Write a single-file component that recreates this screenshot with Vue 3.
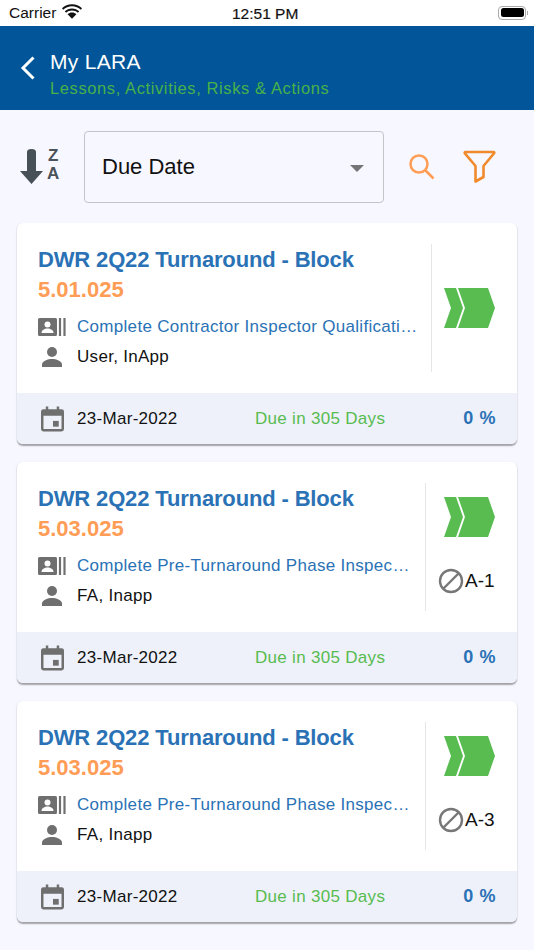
<script setup>
const cards = [
  { code: '5.01.025', task: 'Complete Contractor Inspector Qualificati…', user: 'User, InApp', tag: '' },
  { code: '5.03.025', task: 'Complete Pre-Turnaround Phase Inspec…', user: 'FA, Inapp', tag: 'A-1' },
  { code: '5.03.025', task: 'Complete Pre-Turnaround Phase Inspec…', user: 'FA, Inapp', tag: 'A-3' },
]
</script>

<template>
  <div class="screen">
    <div class="status">
      <div class="status-left">
        <span>Carrier</span>
        <svg class="wifi" width="20" height="15" viewBox="0 0 20 15"><path d="M10 2.200c3.400 0 6.500 1.300 8.800 3.500l1.200-1.400C17.400 1.800 13.900.3 10 .3S2.600 1.800 0 4.300l1.200 1.400C3.500 3.500 6.600 2.200 10 2.200z" fill="#111"/><path d="M10 6.400c2.300 0 4.300.9 5.900 2.300l1.300-1.400C15.300 5.500 12.800 4.400 10 4.400S4.700 5.500 2.800 7.300l1.300 1.400C5.700 7.300 7.700 6.400 10 6.400z" fill="#111"/><path d="M10 8.500c-1.700 0-3.200.6-4.400 1.700L10 14.800l4.400-4.600C13.200 9.100 11.700 8.500 10 8.500z" fill="#111"/></svg>
      </div>
      <span class="time">12:51 PM</span>
      <div class="battery"><span class="battery-fill"></span><span class="battery-nub"></span></div>
    </div>

    <header class="header">
      <svg class="back" width="16" height="26" viewBox="0 0 16 26"><path d="M13.500 2.500 3 13l10.500 10.500" fill="none" stroke="#fff" stroke-width="3"/></svg>
      <div class="titles">
        <div class="title">My LARA</div>
        <div class="subtitle">Lessons, Activities, Risks &amp; Actions</div>
      </div>
    </header>

    <div class="toolbar">
      <div class="sort">
        <svg class="sort-arrow" width="23" height="35" viewBox="0 0 23 35"><path d="M7 3a4.500 3 0 0 1 9 0v19h7L11.500 35 0 22h7z" fill="#474f57"/></svg>
        <div class="sort-letters"><span>Z</span><span>A</span></div>
      </div>
      <div class="select">
        <span>Due Date</span>
        <span class="caret"></span>
      </div>
      <svg class="search" width="28" height="28" viewBox="0 0 28 28"><circle cx="11" cy="11" r="8.500" fill="none" stroke="#ff9d55" stroke-width="2.500"/><path d="m17.500 17.500 8 8" fill="none" stroke="#ff9d55" stroke-width="2.500"/></svg>
      <svg class="funnel" width="33" height="33" viewBox="0 0 33 33"><path d="M2.500 2h28c.8 0 1 .8.600 1.300L20.500 16v11l-8 4.500V16L1.900 3.300C1.500 2.800 1.700 2 2.500 2z" fill="none" stroke="#f08a2c" stroke-width="2.600" stroke-linejoin="round"/></svg>
    </div>

    <div class="cards">
      <article v-for="(card, i) in cards" :key="i" class="card">
        <div class="card-body">
          <div class="info">
            <div class="card-title">DWR 2Q22 Turnaround - Block</div>
            <div class="code">{{ card.code }}</div>
            <div class="row task-row">
              <svg class="icon" width="28" height="20" viewBox="0 0 28 20"><path d="M1.500 1h16A1.500 1.500 0 0 1 19 2.500v15a1.500 1.500 0 0 1-1.500 1.500h-16A1.500 1.500 0 0 1 0 17.500v-15A1.500 1.500 0 0 1 1.500 1z" fill="#6f6f6f"/><circle cx="9.500" cy="7.500" r="3" fill="#fff"/><path d="M3.500 16c0-3 3-4.500 6-4.500s6 1.500 6 4.500z" fill="#fff"/><path d="M22 1v18M26.500 1v18" stroke="#6f6f6f" stroke-width="2.200"/></svg>
              <span class="task">{{ card.task }}</span>
            </div>
            <div class="row user-row">
              <svg class="icon" width="28" height="20" viewBox="0 0 28 20"><circle cx="14" cy="5" r="5" fill="#6f6f6f"/><path d="M4 20v-2.500C4 14 10 12 14 12s10 2 10 5.500V20z" fill="#6f6f6f"/></svg>
              <span>{{ card.user }}</span>
            </div>
          </div>
          <div class="status-col" :class="{ tagged: card.tag }">
            <svg class="chevrons" width="51" height="40" viewBox="0 0 51 40"><path d="M0 0h12l7 20-7 20H0l7-20z" fill="#58bc50"/><path d="M14 0h30l7 20-7 20H14l7-20z" fill="#58bc50"/></svg>
            <div v-if="card.tag" class="tag">
              <svg width="26" height="26" viewBox="0 0 26 26"><circle cx="13" cy="13" r="11" fill="none" stroke="#777" stroke-width="2.400"/><path d="M5.500 20.500 20.500 5.500" stroke="#777" stroke-width="2.400"/></svg>
              <span>{{ card.tag }}</span>
            </div>
          </div>
        </div>
        <div class="card-foot">
          <div class="date">
            <svg class="cal" width="23" height="26" viewBox="0 0 24 26"><path fill-rule="evenodd" d="M5 0h2.600v2.800h8.800V0H19v2.800h2.500A2.500 2.500 0 0 1 24 5.300v18.200a2.500 2.500 0 0 1-2.500 2.500h-19A2.500 2.500 0 0 1 0 23.500V5.300a2.500 2.500 0 0 1 2.500-2.500H5zM2.600 9.500v14h18.800v-14z" fill="#6f6f6f"/><rect x="12.500" y="15" width="6" height="6" fill="#6f6f6f"/></svg>
            <span>23-Mar-2022</span>
          </div>
          <span class="due">Due in 305 Days</span>
          <span class="pct">0 %</span>
        </div>
      </article>
    </div>
  </div>
</template>

<style scoped>
.screen {
  width: 534px;
  height: 950px;
  overflow: hidden;
  background: #f7f7ff;
  font-family: "Liberation Sans", Arial, sans-serif;
  color: #111;
}
.status {
  height: 26px;
  background: #fff;
  display: flex;
  align-items: center;
  justify-content: space-between;
  padding: 0 8px 0 9px;
  font-size: 15.500px;
  position: relative;
}
.status-left {
  display: flex;
  align-items: center;
  gap: 6px;
}
.wifi { margin-top: -4px; }
.time {
  position: absolute;
  left: 232px;
  top: 5px;
  font-size: 15.500px;
  -webkit-text-stroke: 0.2px #111;
}
.battery {
  width: 28px;
  height: 14px;
  border: 1px solid #aaa;
  border-radius: 4px;
  padding: 1.500px;
  box-sizing: border-box;
  display: flex;
  position: relative;
  margin-top: -1px;
}
.battery-fill {
  flex: 1;
  background: #000;
  border-radius: 2.500px;
}
.battery-nub {
  position: absolute;
  right: -3px;
  top: 4px;
  width: 1.500px;
  height: 4px;
  background: #aaa;
}
.header {
  height: 84px;
  background: #015598;
  display: flex;
  align-items: center;
  padding-left: 20px;
  gap: 14px;
  box-sizing: border-box;
}
.back { margin-top: -1px; flex: none; }
.title {
  color: #fff;
  font-size: 21px;
  line-height: 26px;
  letter-spacing: 0.3px;
}
.subtitle {
  color: #47b249;
  font-size: 16.500px;
  line-height: 24px;
  letter-spacing: 0.6px;
  margin-top: 1px;
}
.titles { margin-top: -2px; padding-top: 14px; }
.toolbar {
  height: 113px;
  display: flex;
  align-items: center;
  padding-left: 20px;
  box-sizing: border-box;
}
.sort {
  display: flex;
  align-items: center;
  gap: 4px;
  width: 64px;
  flex: none;
}
.sort-letters {
  display: flex;
  flex-direction: column;
  font-size: 17px;
  font-weight: 700;
  line-height: 18px;
  color: #4a525a;
  margin-top: -4px;
}
.sort-letters span { text-align: center; }
.select {
  width: 300px;
  height: 72px;
  border: 1.500px solid #c4c4c8;
  border-radius: 4px;
  box-sizing: border-box;
  display: flex;
  align-items: center;
  justify-content: space-between;
  padding: 0 19px 0 17px;
  font-size: 22px;
}
.caret {
  width: 0;
  height: 0;
  border-left: 7px solid transparent;
  border-right: 7px solid transparent;
  border-top: 7.500px solid #757578;
  margin-top: 3px;
}
.search { margin-left: 24px; flex: none; margin-top: 1px; }
.funnel { margin-left: 27px; flex: none; }
.cards {
  display: flex;
  flex-direction: column;
  gap: 18px;
  padding: 0 17px;
}
.card {
  height: 221px;
  background: #fff;
  border-radius: 6px;
  overflow: hidden;
  box-shadow: 0 1.500px 1.500px rgba(0, 0, 0, 0.35);
  display: flex;
  flex-direction: column;
}
.card-body {
  height: 170px;
  display: flex;
  box-sizing: border-box;
}
.info {
  flex: 1;
  min-width: 0;
  padding: 21.600px 0 0 21px;
}
.card-title {
  color: #2a72b5;
  font-size: 22px;
  font-weight: 700;
  line-height: 30px;
  letter-spacing: -0.15px;
  white-space: nowrap;
}
.code {
  color: #ff9c55;
  font-size: 22px;
  font-weight: 700;
  line-height: 30px;
}
.row {
  display: flex;
  align-items: center;
  gap: 11px;
  font-size: 17px;
  letter-spacing: 0.3px;
  white-space: nowrap;
}
.icon { flex: none; width: 28px; }
.task-row { margin-top: 7px; height: 30px; }
.user-row { height: 30px; }
.task { color: #2a72b5; }
.status-col {
  width: 86px;
  height: 128px;
  margin-top: 21px;
  border-left: 1px solid #e6e6e6;
  display: flex;
  flex-direction: column;
  align-items: flex-start;
  padding-left: 12px;
  padding-top: 44px;
  box-sizing: border-box;
  flex: none;
}
.status-col.tagged {
  width: 92px;
  padding-top: 14px;
  padding-left: 18px;
}
.tag {
  display: flex;
  align-items: center;
  gap: 1px;
  font-size: 19px;
  margin: 31px 0 0 -6px;
}
.card-foot {
  height: 51px;
  background: #eef1fa;
  display: flex;
  align-items: center;
  padding: 0 21px 0 24px;
  font-size: 17px;
  letter-spacing: 0.3px;
}
.date {
  display: flex;
  align-items: center;
  gap: 13px;
  width: 214px;
}
.cal { flex: none; }
.due { color: #58bc50; }
.pct {
  margin-left: auto;
  color: #2a72b5;
  font-weight: 700;
  font-size: 18px;
  letter-spacing: 0.6px;
}
</style>
